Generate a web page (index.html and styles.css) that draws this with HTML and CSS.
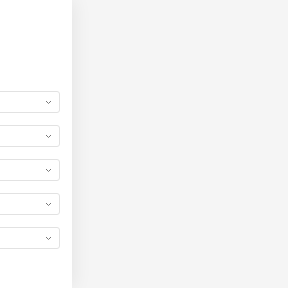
FILE: index.html
```html
<!DOCTYPE html>
<html>
<head>
<meta charset="utf-8">
<link rel="stylesheet" href="styles.css">
</head>
<body>
<div class="layout">
  <aside class="sidebar">
    <div class="filters">
      <div class="select"><svg class="chev" width="7" height="5" viewBox="0 0 7 5"><path d="M1 1l2.5 2.5 2.5-2.5" fill="none" stroke="#777" stroke-width="1"/></svg></div>
      <div class="select"><svg class="chev" width="7" height="5" viewBox="0 0 7 5"><path d="M1 1l2.5 2.5 2.5-2.5" fill="none" stroke="#777" stroke-width="1"/></svg></div>
      <div class="select"><svg class="chev" width="7" height="5" viewBox="0 0 7 5"><path d="M1 1l2.5 2.5 2.5-2.5" fill="none" stroke="#777" stroke-width="1"/></svg></div>
      <div class="select"><svg class="chev" width="7" height="5" viewBox="0 0 7 5"><path d="M1 1l2.5 2.5 2.5-2.5" fill="none" stroke="#777" stroke-width="1"/></svg></div>
      <div class="select"><svg class="chev" width="7" height="5" viewBox="0 0 7 5"><path d="M1 1l2.5 2.5 2.5-2.5" fill="none" stroke="#777" stroke-width="1"/></svg></div>
    </div>
  </aside>
  <main class="main"></main>
</div>
</body>
</html>
```
FILE: styles.css
```css
html, body { margin: 0; padding: 0; }
body { width: 288px; height: 288px; overflow: hidden; background: #f5f5f5; font-family: "Liberation Sans", sans-serif; }
.layout { display: flex; height: 288px; }
.sidebar {
  width: 72px;
  flex: none;
  background: #fff;
  position: relative;
  z-index: 1;
  box-shadow: 2px 0 18px rgba(0,0,0,0.07);
  overflow: hidden;
}
.filters {
  display: flex;
  flex-direction: column;
  gap: 12px;
  padding-top: 91px;
  padding-right: 12px;
  margin-left: -40px;
}
.select {
  height: 20px;
  border: 1px solid #e2e2e2;
  border-radius: 3px;
  background: #fff;
  display: flex;
  align-items: center;
  justify-content: flex-end;
  padding-right: 7px;
}
.chev { display: block; }
.main { flex: 1; background: #f5f5f5; }
```
